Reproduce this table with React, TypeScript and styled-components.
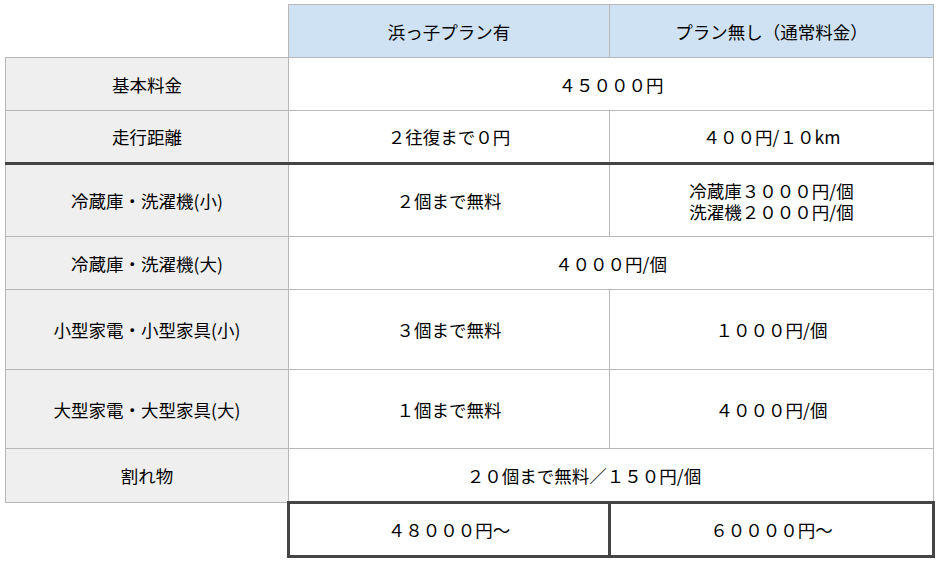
import React from "react";
import styled, { createGlobalStyle } from "styled-components";

const Global = createGlobalStyle`
  html, body { margin: 0; padding: 0; background: #fff; }
  body { font-family: "Noto Sans CJK JP", "Noto Sans", sans-serif; color: #000; }
`;

const Wrap = styled.div`
  padding: 4px 5px 0 5px;
`;

const Table = styled.table`
  border-collapse: collapse;
  table-layout: fixed;
  width: 928px;
  font-size: 17.5px;
`;

const Row = styled.tr<{ $h: number; $thick?: boolean }>`
  height: ${(p) => p.$h}px;
  & > td, & > th {
    border-bottom: ${(p) => (p.$thick ? "3px solid #444" : "1px solid #b8b8b8")};
  }
`;

const Blank = styled.td`
  border: none !important;
  background: #fff;
`;

const Head = styled.th`
  background: #cfe2f3;
  border: 1px solid #b8b8b8;
  font-weight: 400;
  text-align: center;
  padding: 0;
`;

const Label = styled.td`
  background: #efefef;
  border: 1px solid #b8b8b8;
  text-align: center;
  padding: 0;
`;

const Cell = styled.td<{ $padRight?: number }>`
  background: #fff;
  border: 1px solid #b8b8b8;
  text-align: center;
  padding: 0 ${(p) => p.$padRight ?? 0}px 0 0;
  line-height: 21px;
`;

const Total = styled.td`
  background: #fff;
  border: 3px solid #444 !important;
  text-align: center;
  padding: 0;
`;

export default function App() {
  return (
    <>
      <Global />
      <Wrap>
        <Table>
          <colgroup>
            <col style={{ width: 283 }} />
            <col style={{ width: 321 }} />
            <col style={{ width: 324 }} />
          </colgroup>
          <tbody>
            <Row $h={53}>
              <Blank />
              <Head>浜っ子プラン有</Head>
              <Head>プラン無し（通常料金）</Head>
            </Row>
            <Row $h={53}>
              <Label>基本料金</Label>
              <Cell colSpan={2}>４５０００円</Cell>
            </Row>
            <Row $h={53} $thick>
              <Label>走行距離</Label>
              <Cell>２往復まで０円</Cell>
              <Cell>４００円/１０km</Cell>
            </Row>
            <Row $h={73}>
              <Label>冷蔵庫・洗濯機(小)</Label>
              <Cell>２個まで無料</Cell>
              <Cell>
                冷蔵庫３０００円/個
                <br />
                洗濯機２０００円/個
              </Cell>
            </Row>
            <Row $h={53}>
              <Label>冷蔵庫・洗濯機(大)</Label>
              <Cell colSpan={2}>４０００円/個</Cell>
            </Row>
            <Row $h={80}>
              <Label>小型家電・小型家具(小)</Label>
              <Cell>３個まで無料</Cell>
              <Cell>１０００円/個</Cell>
            </Row>
            <Row $h={79}>
              <Label>大型家電・大型家具(大)</Label>
              <Cell>１個まで無料</Cell>
              <Cell>４０００円/個</Cell>
            </Row>
            <Row $h={54}>
              <Label>割れ物</Label>
              <Cell colSpan={2} $padRight={54}>
                ２０個まで無料／１５０円/個
              </Cell>
            </Row>
            <Row $h={54}>
              <Blank />
              <Total>４８０００円～</Total>
              <Total>６００００円～</Total>
            </Row>
          </tbody>
        </Table>
      </Wrap>
    </>
  );
}
